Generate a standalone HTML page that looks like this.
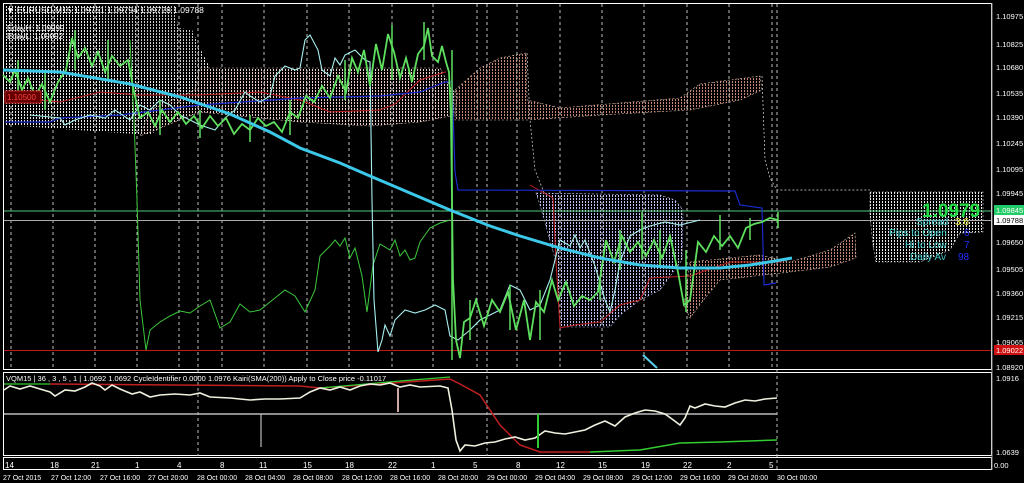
<!DOCTYPE html>
<html><head><meta charset="utf-8"><style>
html,body{margin:0;padding:0;background:#000;width:1024px;height:483px;overflow:hidden}
svg{display:block}
text{font-family:"Liberation Sans",sans-serif}
</style></head><body>
<svg width="1024" height="483" viewBox="0 0 1024 483" xmlns="http://www.w3.org/2000/svg">
<defs>
<pattern id="dw" width="3" height="3" patternUnits="userSpaceOnUse"><rect width="1" height="2" fill="#e8e8e8"/></pattern>
<pattern id="dg" width="3" height="3" patternUnits="userSpaceOnUse"><rect width="1" height="2" fill="#c8c8c8"/></pattern>
<pattern id="dp" width="3" height="3" patternUnits="userSpaceOnUse"><rect width="1" height="2" fill="#ecccc4"/></pattern>
<pattern id="dv" width="3" height="3" patternUnits="userSpaceOnUse"><rect width="1" height="2" fill="#c0c0f4"/></pattern>
<pattern id="dr" width="3" height="3" patternUnits="userSpaceOnUse"><rect width="1" height="2" fill="#c88878"/></pattern>
</defs>
<rect width="1024" height="483" fill="#000"/>
<rect x="3.5" y="3.5" width="988" height="366" fill="none" stroke="#fff" stroke-width="1"/>
<rect x="3.5" y="372.5" width="988" height="83" fill="none" stroke="#fff" stroke-width="1"/>
<rect x="3.5" y="457.5" width="988" height="12" fill="none" stroke="#fff" stroke-width="1"/>
<line x1="992" y1="3" x2="992" y2="470" stroke="#999"/>

<polygon points="5,5 175,5 178,28 192,30 200,48 210,68 200,100 150,135 5,125" fill="url(#dw)"/>
<polygon points="100,5 175,5 178,28 192,30 200,48 205,68 180,75 100,60" fill="url(#dg)"/>
<polygon points="200,68 440,68 452,90 458,92 455,115 420,122 370,126 300,122 200,112 140,136 150,110 195,90" fill="url(#dp)" stroke="#e8c8c0" stroke-width="0.6" stroke-dasharray="2,2"/>
<polygon points="455,90 480,68 500,58 526,53 527,100 560,108 620,103 680,98 700,84 760,76 762,90 740,100 690,110 600,115 527,120 500,120 455,120" fill="url(#dr)" stroke="#e0c0b0" stroke-width="0.6" stroke-dasharray="2,2"/>
<polygon points="536,193 660,195 675,200 683,210 682,260 660,290 640,300 620,315 610,327 560,327 556,262 540,205" fill="url(#dv)" stroke="#c0c0f0" stroke-width="0.6" stroke-dasharray="2,2"/>
<polygon points="690,262 760,255 790,262 830,250 855,233 856,258 830,267 790,272 720,280 705,298 690,318 684,305" fill="url(#dr)" stroke="#e0c0b0" stroke-width="0.6" stroke-dasharray="2,2"/>
<polygon points="870,192 983,192 983,232 960,233 950,250 920,262 876,262 873,245 870,215" fill="url(#dw)" stroke="#ddd" stroke-width="0.6" stroke-dasharray="2,2"/>
<polyline points="527,53 530,120 535,170 545,195" fill="none" stroke="#ddd" stroke-width="0.7" stroke-dasharray="2,2"/>
<polyline points="762,76 765,160 770,178 777,190 870,190" fill="none" stroke="#ddd" stroke-width="0.7" stroke-dasharray="2,2"/>

<g stroke="#bbb" stroke-width="1" stroke-dasharray="3,3">
<line x1="11" y1="4" x2="11" y2="369"/><line x1="53" y1="4" x2="53" y2="369"/><line x1="95" y1="4" x2="95" y2="369"/><line x1="137" y1="4" x2="137" y2="369"/><line x1="179" y1="4" x2="179" y2="369"/><line x1="198" y1="4" x2="198" y2="456"/><line x1="222" y1="4" x2="222" y2="369"/><line x1="264" y1="4" x2="264" y2="369"/><line x1="307" y1="4" x2="307" y2="369"/><line x1="349" y1="4" x2="349" y2="369"/><line x1="392" y1="4" x2="392" y2="369"/><line x1="433" y1="4" x2="433" y2="369"/><line x1="487" y1="4" x2="487" y2="456"/><line x1="477" y1="4" x2="477" y2="369"/><line x1="517" y1="4" x2="517" y2="369"/><line x1="560" y1="4" x2="560" y2="369"/><line x1="602" y1="4" x2="602" y2="369"/><line x1="644" y1="4" x2="644" y2="369"/><line x1="687" y1="4" x2="687" y2="369"/><line x1="729" y1="4" x2="729" y2="369"/><line x1="772" y1="4" x2="772" y2="369"/><line x1="777" y1="4" x2="777" y2="470"/>
</g>

<line x1="4" y1="211" x2="991" y2="211" stroke="#4fc87a"/>
<line x1="4" y1="220.5" x2="991" y2="220.5" stroke="#aaa"/>
<line x1="4" y1="350.5" x2="991" y2="350.5" stroke="#c01818"/>

<polyline points="5,93 40,93 40,100 60,102 100,92 140,95 200,95 260,92 300,100 330,112 380,110 395,104 420,80 445,72 446,72" fill="none" stroke="#c02020" stroke-width="1"/>
<polyline points="530,185 553,198 556,260 560,328 575,325 600,322 620,305 640,300 650,278 690,276 730,262 782,262" fill="none" stroke="#c02020" stroke-width="1"/>
<polyline points="5,122 50,122 60,118 120,115 200,105 300,98 380,96 420,92 445,82 452,82 455,172 458,190 735,191 740,205 762,208 764,285 776,283" fill="none" stroke="#1a2acc" stroke-width="1.2"/>

<polyline points="130,40 134,120 137,200 140,300 146,350 150,330 160,322 170,316 180,311 190,313 200,306 210,300 220,328 230,322 240,304 250,312 260,310 270,302 285,290 295,296 305,312 315,290 320,256 330,246 335,240 340,246 345,238 350,258 355,248 362,276 367,312 373,265 380,244 390,250 395,240 400,256 405,250 410,260 415,258 420,242 430,228 440,223 450,220" fill="none" stroke="#3cc83c" stroke-width="1"/>

<polyline points="30,115 60,118 65,125 75,120 90,115 105,118 115,110 130,120 140,105 150,110 160,100 170,105 180,115 200,125 215,130 225,118 235,110 245,92 250,96 260,102 270,96 275,76 285,66 295,70 300,68 305,40 310,35 318,50 322,70 330,76 335,58 340,65 345,55 355,50 365,60 370,62 372,200 374,300 378,352 382,340 385,325 390,336 395,320 405,310 415,313 425,310 435,305 445,310 450,336 458,340 470,330 480,320 490,315 500,310 510,285 520,290 530,310 540,305 550,280 555,260 560,240 570,246 575,235 580,248 585,240 595,266 605,300 610,312 615,290 620,262 630,236 640,230 650,226 665,222 680,225 700,220" fill="none" stroke="#a8f0f0" stroke-width="1.1"/>
<polyline points="643,355 657,368" fill="none" stroke="#5ad0f0" stroke-width="2"/>

<polyline points="3,75 10,82 15,70 22,90 28,78 35,96 42,84 50,102 58,82 66,70 72,38 78,58 85,48 92,66 98,52 105,72 112,56 120,66 128,60 134,92 140,118 148,112 155,126 162,110 170,122 178,112 186,124 194,116 202,128 210,116 218,126 226,118 234,134 242,124 250,130 258,118 266,126 274,122 282,132 290,112 298,118 306,96 314,102 322,86 330,98 338,76 346,92 352,58 358,72 364,50 370,86 376,44 382,70 388,34 394,52 400,78 406,58 412,82 418,54 424,46 428,28 432,56 438,62 442,46 446,62 449,72 451,120 453,280 456,340 460,358 464,322 470,318 476,300 484,326 492,300 500,312 508,292 516,330 524,300 530,340 536,302 544,312 552,280 558,300 566,282 574,306 582,296 590,300 598,292 606,240 614,262 622,236 630,252 638,242 646,256 654,240 662,258 670,236 678,272 684,305 690,300 698,242 706,252 714,236 722,246 730,236 738,248 746,228 754,224 762,222 770,218 778,220" fill="none" stroke="#5ee05e" stroke-width="1.8"/>
<g stroke="#5ee05e" stroke-width="1.5">
<line x1="75" y1="30" x2="75" y2="70"/><line x1="108" y1="40" x2="108" y2="80"/><line x1="250" y1="115" x2="250" y2="142"/><line x1="392" y1="25" x2="392" y2="80"/><line x1="424" y1="22" x2="424" y2="60"/><line x1="452" y1="50" x2="452" y2="360"/><line x1="540" y1="290" x2="540" y2="340"/><line x1="600" y1="280" x2="600" y2="300"/><line x1="642" y1="212" x2="642" y2="260"/><line x1="686" y1="250" x2="686" y2="312"/><line x1="720" y1="215" x2="720" y2="250"/><line x1="778" y1="212" x2="778" y2="228"/>
<line x1="18" y1="60" x2="18" y2="100"/><line x1="45" y1="70" x2="45" y2="110"/><line x1="160" y1="100" x2="160" y2="135"/><line x1="200" y1="110" x2="200" y2="138"/><line x1="290" y1="100" x2="290" y2="135"/><line x1="345" y1="60" x2="345" y2="100"/><line x1="470" y1="300" x2="470" y2="340"/><line x1="510" y1="285" x2="510" y2="330"/><line x1="620" y1="230" x2="620" y2="270"/><line x1="660" y1="230" x2="660" y2="265"/><line x1="750" y1="218" x2="750" y2="240"/>
</g>

<polyline points="3,70 60,72 130,84 180,97 230,114 270,132 300,148 340,163 370,176 410,193 450,210 490,226 520,236 560,248 600,258 640,265 680,268 720,268 750,265 775,261 792,258" fill="none" stroke="#3cc8e8" stroke-width="3"/>

<rect x="5" y="91" width="36" height="12" fill="#600" stroke="#c02020"/>
<text x="7" y="100" font-size="8" fill="#f44">1.10500</text>
<text x="6" y="13" font-size="8.5" fill="#fff">▼ EURUSD,M15  1.09751 1.09794 1.09728 1.09788</text>
<text x="7" y="31" font-size="8" fill="#fff">EdayH: 1.09999</text>
<text x="7" y="39" font-size="8" fill="#fff">EdayL: 1.09092</text>

<text x="922" y="217" font-size="19" font-weight="bold" fill="#22dd44">1.0979</text>
<text x="916" y="225" font-size="10" fill="#40c8c8">Spread</text>
<text x="955" y="225" font-size="10" fill="#f0f040">3.6</text>
<text x="889" y="236" font-size="10" fill="#40c8c8">Pips to Open</text>
<text x="964" y="236" font-size="10" fill="#2030ff">6</text>
<text x="905" y="248" font-size="10" fill="#40c8c8">Hi to Low</text>
<text x="964" y="248" font-size="10" fill="#2030ff">7</text>
<text x="910" y="260" font-size="10" fill="#40c8c8">Daily Av</text>
<text x="958" y="260" font-size="10" fill="#2030ff">98</text>

<g font-size="7.5" fill="#fff">
<text x="996" y="19">1.10975</text><text x="996" y="47">1.10825</text><text x="996" y="70">1.10680</text><text x="996" y="96">1.10535</text><text x="996" y="120">1.10390</text><text x="996" y="146">1.10245</text><text x="996" y="172">1.10095</text><text x="996" y="196">1.09945</text><text x="996" y="245">1.09650</text><text x="996" y="272">1.09505</text><text x="996" y="296">1.09360</text><text x="996" y="320">1.09215</text><text x="996" y="345">1.09065</text><text x="996" y="370">1.08920</text>
<text x="996" y="381">1.0916</text><text x="996" y="455">1.0639</text><text x="994" y="468">0.00</text>
</g>
<rect x="994" y="205" width="30" height="10" fill="#22cc66"/><text x="996" y="213" font-size="7.5" fill="#fff">1.09845</text>
<rect x="994" y="215" width="30" height="10" fill="#fff"/><text x="996" y="223" font-size="7.5" fill="#000">1.09788</text>
<rect x="994" y="345" width="30" height="10" fill="#d01010"/><text x="996" y="353" font-size="7.5" fill="#fff">1.09022</text>

<line x1="4" y1="414" x2="777" y2="414" stroke="#bbb" stroke-width="1.5"/>
<polyline points="4,384 50,384" stroke="#3c3" stroke-width="1.2" fill="none"/>
<polyline points="50,384 300,386 320,388 450,379 460,384 480,395 500,425 520,445 540,452 590,452" stroke="#c02020" stroke-width="1.5" fill="none"/>
<polyline points="320,388 400,381 450,377" stroke="#3c3" stroke-width="1.2" fill="none"/>
<polyline points="590,452 640,450 680,443 720,442 777,440" stroke="#3c3" stroke-width="1.5" fill="none"/>
<polyline points="4,390 10,386 20,389 30,386 40,389 50,392 55,396 65,390 75,391 85,387 92,383 100,386 105,390 112,385 120,389 132,394 140,392 150,397 160,395 175,394 190,395 200,393 210,397 230,398 250,400 265,399 280,399 300,398 310,392 320,388 330,390 340,387 350,390 360,386 370,384 380,385 390,383 400,387 410,385 420,387 440,386 448,388 452,410 456,440 460,451 465,445 475,446 485,443 495,442 505,439 515,437 525,440 535,438 545,431 555,433 565,434 575,432 585,430 595,425 605,421 615,426 625,417 635,413 645,410 655,411 665,414 672,419 680,425 685,418 690,406 695,408 705,404 715,406 725,407 735,403 745,400 755,401 765,399 777,398" fill="none" stroke="#f0f0e0" stroke-width="1.6"/>
<line x1="398" y1="388" x2="398" y2="412" stroke="#d0a8a8" stroke-width="2"/>
<line x1="261" y1="414" x2="261" y2="447" stroke="#bbb" stroke-width="1.2"/>
<line x1="538" y1="414" x2="538" y2="448" stroke="#3c3" stroke-width="2"/>
<text x="6" y="381" font-size="7.5" fill="#fff">VQM15 | 36 , 3 , 5 , 1 | 1.0692 1.0692 CycleIdentifier 0.0000 1.0976 Kairi(SMA(200)) Apply to Close price -0.11017</text>

<g font-size="8" fill="#fff">
<text x="5" y="468">14</text><text x="50" y="468">18</text><text x="91" y="468">21</text><text x="135" y="468">1</text><text x="177" y="468">4</text><text x="220" y="468">8</text><text x="259" y="468">11</text><text x="303" y="468">15</text><text x="345" y="468">18</text><text x="388" y="468">22</text><text x="431" y="468">1</text><text x="473" y="468">5</text><text x="516" y="468">8</text><text x="556" y="468">12</text><text x="598" y="468">15</text><text x="641" y="468">19</text><text x="683" y="468">22</text><text x="727" y="468">2</text><text x="769" y="468">5</text>
</g>
<g font-size="7" fill="#fff">
<text x="3" y="480">27 Oct 2015</text><text x="51" y="480">27 Oct 12:00</text><text x="100" y="480">27 Oct 16:00</text><text x="148" y="480">27 Oct 20:00</text><text x="197" y="480">28 Oct 00:00</text><text x="245" y="480">28 Oct 04:00</text><text x="293" y="480">28 Oct 08:00</text><text x="342" y="480">28 Oct 12:00</text><text x="390" y="480">28 Oct 16:00</text><text x="438" y="480">28 Oct 20:00</text><text x="487" y="480">29 Oct 00:00</text><text x="535" y="480">29 Oct 04:00</text><text x="583" y="480">29 Oct 08:00</text><text x="632" y="480">29 Oct 12:00</text><text x="680" y="480">29 Oct 16:00</text><text x="728" y="480">29 Oct 20:00</text><text x="777" y="480">30 Oct 00:00</text>
</g>
</svg>
</body></html>
